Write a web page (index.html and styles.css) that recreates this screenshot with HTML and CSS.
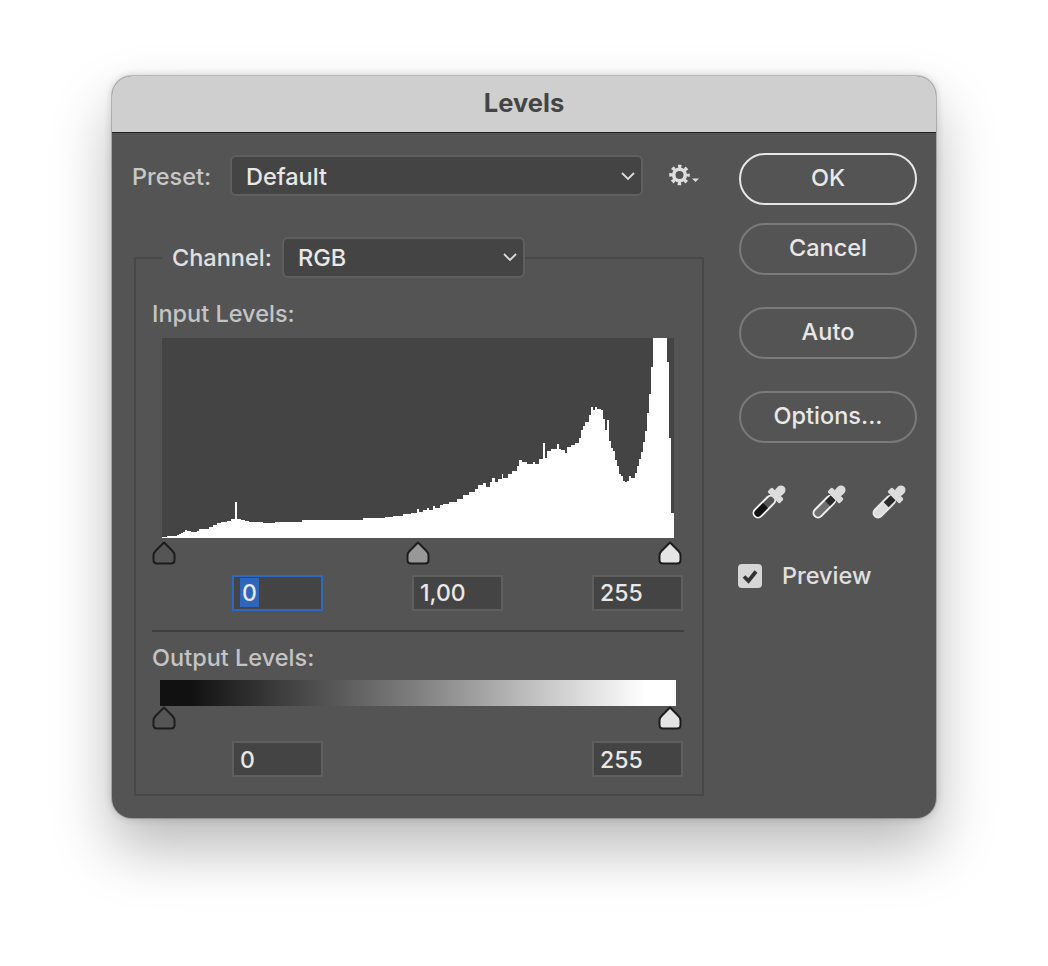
FILE: index.html
```html
<!DOCTYPE html>
<html lang="en">
<head>
    <meta charset="UTF-8">
    <meta name="viewport" content="width=device-width, initial-scale=1.0">
    <title>Levels</title>
    <link rel="stylesheet" href="styles.css">
</head>
<body>

    <svg class="defs" width="0" height="0">
        <symbol id="thumb" viewBox="0 0 24 24">
            <path d="M12 1.5 L20.5 10 Q22.5 12 22.5 14.5 V19 Q22.5 22.5 19 22.5 H5 Q1.5 22.5 1.5 19 V14.5 Q1.5 12 3.5 10 Z"/>
        </symbol>
        <symbol id="chevron" viewBox="0 0 14 8">
            <path d="M1 1 L7 7 L13 1" fill="none" stroke="#dcdcdc" stroke-width="1.8"/>
        </symbol>
    </svg>

    <div class="dialog">
        <div class="titlebar">Levels</div>

        <div class="dialog-body">
            <!-- left column -->
            <div class="main-col">
                <div class="preset-row">
                    <span class="label">Preset:</span>
                    <div class="select select-preset">
                        <span>Default</span>
                        <svg class="chevron"><use href="#chevron"/></svg>
                    </div>
                    <svg class="gear" width="32" height="24" viewBox="0 0 32 24">
                        <circle cx="10.5" cy="11" r="5.8" fill="none" stroke="#dedede" stroke-width="3.6"/>
                        <circle cx="10.5" cy="11" r="8.6" fill="none" stroke="#dedede" stroke-width="3.4" stroke-dasharray="3.4 3.35" stroke-dashoffset="1.7"/>
                        <path d="M23 14.5 H30 L26.5 18 Z" fill="#dedede"/>
                    </svg>
                </div>

                <fieldset class="channel-box">
                    <legend class="channel-legend">
                        <span class="label-bright">Channel:</span>
                        <div class="select select-channel">
                            <span>RGB</span>
                            <svg class="chevron"><use href="#chevron"/></svg>
                        </div>
                    </legend>

                    <div class="section-title">Input Levels:</div>
                    <svg class="histogram" width="512" height="200" viewBox="0 0 512 200" shape-rendering="crispEdges">
                        <path fill="#fff" d="M0 200 V199 H5 V198 H15 V197 H17 V196 H19 V195 H21 V194 H23 V192 H25 V193 H29 V194 H35 V193 H37 V191 H47 V189 H51 V187 H55 V185 H59 V184 H65 V183 H69 V181 H73 V164 H75 V181 H79 V182 H83 V183 H87 V184 H101 V185 H113 V184 H140 V182 H201 V180 H223 V179 H231 V178 H241 V176 H249 V175 H255 V171 H257 V174 H261 V172 H265 V170 H267 V172 H271 V168 H273 V170 H278 V167 H281 V166 H287 V164 H295 V161 H301 V157 H307 V154 H313 V151 H316 V147 H321 V145 H324 V149 H328 V144 H330 V140 H333 V144 H336 V141 H340 V136 H341 V140 H346 V136 H350 V133 H355 V128 H357 V122 H360 V124 H365 V126 H371 V124 H373 V126 H377 V121 H381 V105 H383 V120 H385 V113 H389 V111 H395 V106 H397 V111 H399 V112 H403 V115 H405 V109 H409 V107 H413 V105 H417 V100 H419 V92 H421 V88 H423 V84 H427 V77 H429 V69 H431 V72 H433 V69 H435 V71 H439 V72 H441 V81 H443 V92 H445 V82 H447 V103 H449 V110 H451 V113 H453 V122 H455 V128 H457 V136 H459 V138 H461 V143 H463 V144 H465 V143 H467 V138 H469 V140 H473 V135 H475 V128 H477 V121 H479 V114 H481 V104 H483 V93 H485 V75 H487 V56 H489 V29 H491 V0 H505 V24 H507 V100 H509 V175 H512 V200 Z"/>
                    </svg>
                    <div class="thumbs">
                        <svg class="thumb thumb-black"><use href="#thumb"/></svg>
                        <svg class="thumb thumb-gray"><use href="#thumb"/></svg>
                        <svg class="thumb thumb-white"><use href="#thumb"/></svg>
                    </div>
                    <div class="fields fields-input">
                        <div class="field field-focus"><span class="selected">0</span></div>
                        <div class="field">1,00</div>
                        <div class="field">255</div>
                    </div>

                    <div class="divider"></div>

                    <div class="section-title section-output">Output Levels:</div>
                    <div class="gradient"></div>
                    <div class="thumbs thumbs-output">
                        <svg class="thumb thumb-black"><use href="#thumb"/></svg>
                        <svg class="thumb thumb-white"><use href="#thumb"/></svg>
                    </div>
                    <div class="fields fields-output">
                        <div class="field">0</div>
                        <div class="field">255</div>
                    </div>
                </fieldset>
            </div>

            <!-- right column -->
            <div class="side-col">
                <button class="btn btn-default">OK</button>
                <button class="btn btn-cancel">Cancel</button>
                <button class="btn btn-auto">Auto</button>
                <button class="btn btn-options">Options...</button>

                <div class="droppers">
                    <svg class="dropper" width="34" height="34" viewBox="-17 -17 34 34">
                        <g transform="rotate(45)">
                            <rect x="-4.5" y="-7" width="9" height="27" rx="4.5" fill="#545454" stroke="#f0f0f0" stroke-width="2"/>
                            <path d="M-3.5 5 H3.5 V15.5 A3.5 3.5 0 0 1 -3.5 15.5 Z" fill="#111"/>
                            <rect x="-4.5" y="-21.5" width="9" height="12" rx="4.5" fill="#dcdcdc"/>
                            <rect x="-8.5" y="-12.5" width="17" height="6.5" rx="1.5" fill="#dcdcdc"/>
                        </g>
                    </svg>
                    <svg class="dropper" width="34" height="34" viewBox="-17 -17 34 34">
                        <g transform="rotate(45)">
                            <rect x="-4.5" y="-7" width="9" height="27" rx="4.5" fill="#6f6f6f" stroke="#f0f0f0" stroke-width="2"/>
                            <path d="M-3.5 -6 H3.5 V2 H-3.5 Z" fill="#2a2a2a"/>
                            <rect x="-4.5" y="-21.5" width="9" height="12" rx="4.5" fill="#dcdcdc"/>
                            <rect x="-8.5" y="-12.5" width="17" height="6.5" rx="1.5" fill="#dcdcdc"/>
                        </g>
                    </svg>
                    <svg class="dropper" width="34" height="34" viewBox="-17 -17 34 34">
                        <g transform="rotate(45)">
                            <rect x="-4.5" y="-7" width="9" height="27" rx="4.5" fill="#dcdcdc" stroke="#e8e8e8" stroke-width="2"/>
                            <path d="M-3.5 -6 H3.5 V4 H-3.5 Z" fill="#2a2a2a"/>
                            <rect x="-4.5" y="-21.5" width="9" height="12" rx="4.5" fill="#dcdcdc"/>
                            <rect x="-8.5" y="-12.5" width="17" height="6.5" rx="1.5" fill="#dcdcdc"/>
                        </g>
                    </svg>
                </div>

                <div class="preview-row">
                    <span class="checkbox">
                        <svg width="24" height="24" viewBox="0 0 24 24">
                            <path d="M6 12.5 L10.5 17 L18 7.5" fill="none" stroke="#333" stroke-width="3.8"/>
                        </svg>
                    </span>
                    <span class="preview-label">Preview</span>
                </div>
            </div>
        </div>
    </div>

</body>
</html>
```

FILE: styles.css
```css
body {
    margin: 0;
    height: 966px;
    overflow: hidden;
    background-color: #fff;
    font-family: Inter, "Liberation Sans", sans-serif;
}
.defs {
    position: absolute;
}
.dialog {
    width: 824px;
    height: 742px;
    margin: 76px auto 0;
    border-radius: 20px;
    overflow: hidden;
    background-color: #545454;
    box-shadow: 0 0 0 1px rgba(0, 0, 0, 0.18), 0 0 8px rgba(0, 0, 0, 0.2), 0 30px 60px rgba(0, 0, 0, 0.28);
}
.titlebar {
    height: 56px;
    line-height: 53px;
    text-align: center;
    font-size: 25.5px;
    font-weight: 700;
    color: #444;
    background-color: #cfcfcf;
    border-bottom: 1px solid #222;
}
.dialog-body {
    display: flex;
    gap: 35px;
    padding: 20px 19px 0 22px;
}
.main-col {
    width: 570px;
}

/* preset */
.preset-row {
    display: flex;
    align-items: center;
    margin: 2px 0 0 -2px;
    height: 41px;
}
.label {
    width: 98px;
    padding-top: 2px;
    font-size: 23.5px;
    font-weight: 500;
    color: #c8c8c8;
}
.select {
    display: flex;
    align-items: center;
    justify-content: space-between;
    box-sizing: border-box;
    height: 41px;
    padding: 1px 6px 0 14px;
    font-size: 23.5px;
    font-weight: 500;
    color: #e8e8e8;
    background-color: #444;
    border: 2px solid #5f5f5f;
    border-radius: 6px;
}
.select-preset {
    width: 413px;
}
.select-channel {
    width: 243px;
    padding-top: 0;
    padding-bottom: 1px;
}
.chevron {
    width: 14px;
    height: 8px;
}
.gear {
    margin-left: 26px;
}

/* channel box */
.channel-box {
    box-sizing: border-box;
    height: 559px;
    margin: 41px 0 0;
    padding: 0;
    min-width: 0;
    border: 2px solid #484848;
}
.channel-legend {
    display: flex;
    align-items: center;
    margin-left: 26px;
    padding: 0 0 0 10px;
}
.label-bright {
    width: 110px;
    font-size: 23.5px;
    font-weight: 500;
    color: #e0e0e0;
}
.section-title {
    margin: 22px 0 0 16px;
    height: 28px;
    line-height: 28px;
    font-size: 23.5px;
    font-weight: 500;
    color: #c4c4c4;
}
.section-output {
    margin-top: 12px;
}
.histogram {
    display: block;
    margin: 10px 0 0 26px;
    background-color: #444;
}
.thumbs {
    display: flex;
    justify-content: space-between;
    margin: 3px 20px 0 16px;
    height: 24px;
}
.thumbs-output {
    margin-top: 0;
}
.thumb {
    width: 24px;
    height: 24px;
    stroke: #1c1c1c;
    stroke-width: 2;
    stroke-linejoin: round;
}
.thumb-black {
    fill: #555;
}
.thumb-gray {
    margin-left: 2px;
    fill: #989898;
}
.thumb-white {
    fill: #e4e4e4;
}
.fields {
    display: flex;
}
.fields-input {
    gap: 89px;
    margin: 10px 0 0 96px;
}
.fields-output {
    gap: 269px;
    margin: 11px 0 0 96px;
}
.fields-output .field {
    line-height: 35px;
}
.field {
    box-sizing: border-box;
    width: 91px;
    height: 36px;
    line-height: 33px;
    padding-left: 6px;
    font-size: 23px;
    font-weight: 500;
    color: #e8e8e8;
    background-color: #444;
    border: 2px solid #5f5f5f;
}
.field-focus {
    border-color: #2f68c0;
}
.selected {
    display: inline-block;
    height: 29px;
    line-height: 31px;
    vertical-align: top;
    padding: 0 2px;
    margin-top: 1px;
    background-color: #2f66bb;
}
.divider {
    height: 2px;
    margin: 19px 18px 0 16px;
    background-color: #3e3e3e;
}
.gradient {
    height: 26px;
    margin: 8px 26px 0 24px;
    background: linear-gradient(90deg, #111 0, #111 30px, #808080 50%, #fff 94%);
}

/* buttons */
.side-col {
    display: flex;
    flex-direction: column;
    width: 178px;
}
.btn {
    box-sizing: border-box;
    height: 52px;
    padding: 0 0 4px;
    font-family: inherit;
    font-size: 23.5px;
    font-weight: 500;
    color: #e8e8e8;
    background-color: transparent;
    border: 2px solid #7a7a7a;
    border-radius: 26px;
}
.btn-default {
    border-color: #e6e6e6;
}
.btn-cancel {
    margin-top: 18px;
}
.btn-auto,
.btn-options {
    margin-top: 32px;
}
.droppers {
    display: flex;
    gap: 26px;
    margin: 42px 0 0 13px;
}
.dropper {
    display: block;
}
.preview-row {
    display: flex;
    align-items: center;
    margin: 42px 0 0 -1px;
}
.checkbox {
    display: block;
    width: 24px;
    height: 24px;
    background-color: #d6d6d6;
    border-radius: 4px;
}
.checkbox svg {
    display: block;
}
.preview-label {
    margin-left: 20px;
    font-size: 23.5px;
    font-weight: 500;
    color: #e0e0e0;
}
```
